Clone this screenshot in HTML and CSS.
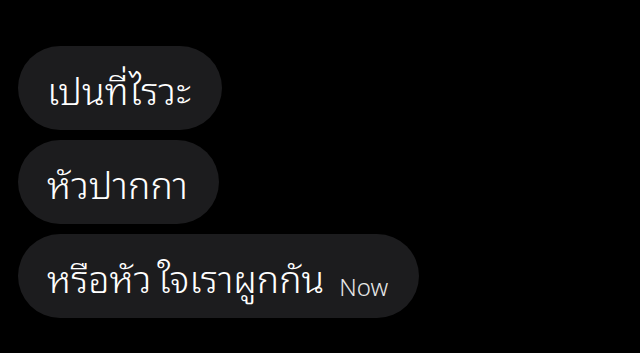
FILE: index.html
```html
<!DOCTYPE html>
<html lang="th">
<head>
    <meta charset="UTF-8">
    <meta name="viewport" content="width=device-width, initial-scale=1.0">
    <link rel="stylesheet" href="styles.css">
    <title>Chat</title>
</head>
<body>
    <div class="chat">
        <div class="bubble">
            <span class="text">เปนที่ไรวะ</span>
        </div>
        <div class="bubble">
            <span class="text">หัวปากกา</span>
        </div>
        <div class="bubble">
            <span class="text">หรือหัว ใจเราผูกกัน</span><span class="time">Now</span>
        </div>
    </div>
</body>
</html>
```

FILE: styles.css
```css
body {
    margin: 0;
    background-color: #000;
    font-family: "Noto Sans Thai Looped", "Noto Sans", "Liberation Sans", sans-serif;
}
.chat {
    display: flex;
    flex-direction: column;
    align-items: flex-start;
    gap: 10px;
    padding: 46px 0 0 18px;
}
/* 吹き出し */
.bubble {
    box-sizing: border-box;
    height: 84px;
    padding: 0 31px 0 29px;
    border-radius: 42px;
    background-color: #1c1c1e;
    color: #fff;
    line-height: 84px;
    white-space: nowrap;
}
.text {
    font-size: 37.5px;
    font-weight: 350;
    word-spacing: -4px;
}
.time {
    margin-left: 15px;
    font-family: "Noto Sans", sans-serif;
    font-size: 24px;
    font-weight: 350;
    vertical-align: -3px;
    color: #e8e8e8;
}
```
